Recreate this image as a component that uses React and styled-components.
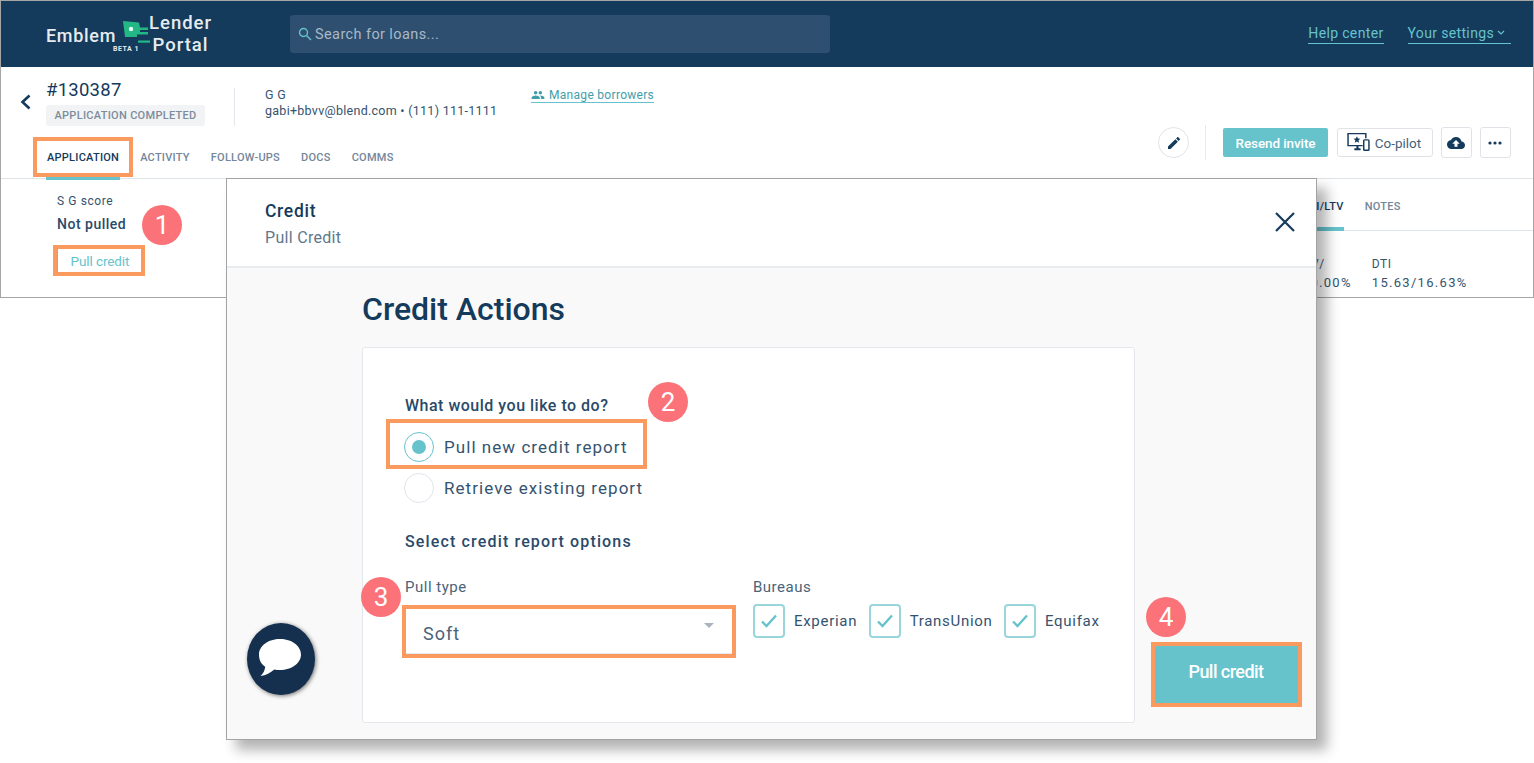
import React from 'react';
import styled, { createGlobalStyle } from 'styled-components';

const NAVY = '#143a5c';
const TEAL = '#66c3cc';
const ORANGE = '#fb9a5f';

const GlobalStyle = createGlobalStyle`
	html, body {
		margin: 0;
		padding: 0;
		background: #fff;
		font-family: Roboto, "Liberation Sans", sans-serif;
		color: ${NAVY};
	}
	* {
		box-sizing: border-box;
	}
`;

const Stage = styled.div`
	position: relative;
	width: 1534px;
	height: 763px;
	overflow: hidden;
`;

const Frame = styled.div`
	width: 1534px;
	height: 298px;
	border: 1px solid #a6a6a6;
	overflow: hidden;
`;

const TopBar = styled.header`
	height: 66px;
	background: ${NAVY};
	display: flex;
	align-items: center;
	padding: 0 22px 0 45px;
`;

const Logo = styled.div`
	width: 244px;
	height: 50px;
	display: flex;
	align-items: center;
	color: #e6ebee;
`;

const LogoLeft = styled.div`
	display: flex;
	flex-direction: column;
	align-items: flex-end;
	margin-top: 10px;
	width: 77px;
`;

const LogoWord = styled.span`
	font-size: 18px;
	line-height: 20px;
	letter-spacing: 0.7px;
	font-weight: 500;
	align-self: flex-start;
`;

const LogoBeta = styled.span`
	font-size: 7px;
	line-height: 8px;
	font-weight: 700;
	letter-spacing: 0.5px;
	margin: -1px -16px 0 0;
`;

const LogoMark = styled.svg`
	width: 30px;
	height: 30px;
	margin-top: 4px;
`;

const LogoRight = styled.div`
	display: flex;
	flex-direction: column;
	align-items: center;
	margin-left: -6px;
	padding-left: 2px;
	font-size: 18.5px;
	line-height: 22px;
	letter-spacing: 1px;
	font-weight: 500;
`;

const SearchBox = styled.div`
	width: 540px;
	height: 38px;
	background: #2e4f6f;
	border-radius: 3px;
	display: flex;
	align-items: center;
	gap: 3px;
	padding-left: 8px;
	color: #a9b9c7;
	font-size: 14.5px;
	letter-spacing: 0.4px;
`;

const TopLinks = styled.nav`
	margin-left: auto;
	display: flex;
	gap: 24px;
`;

const TopLink = styled.a`
	display: flex;
	align-items: center;
	gap: 3px;
	color: ${TEAL};
	font-size: 14px;
	letter-spacing: 0.35px;
	line-height: 17px;
	padding-bottom: 1px;
	padding-right: ${p => (p.$menu ? 6 : 0)}px;
	border-bottom: 1px solid ${TEAL};
`;

const LoanHeader = styled.section`
	height: 112px;
	display: flex;
	justify-content: space-between;
	border-bottom: 1px solid #dfe4e9;
`;

const LoanLeft = styled.div`
	display: flex;
	flex-direction: column;
	justify-content: space-between;
`;

const LoanInfo = styled.div`
	display: flex;
	align-items: flex-start;
	padding: 12px 0 0 18px;
`;

const BackIcon = styled.svg`
	width: 13px;
	height: 16px;
	margin: 15px 14px 0 0;
`;

const IdBlock = styled.div`
	width: 188px;
	padding-right: 28px;
`;

const LoanId = styled.div`
	font-size: 18.5px;
	line-height: 22px;
	letter-spacing: 0.25px;
`;

const StatusBadge = styled.div`
	width: 159px;
	height: 21px;
	margin-top: 4px;
	background: #f1f3f5;
	border-radius: 3px;
	color: #7d8c9b;
	font-size: 11px;
	font-weight: 500;
	letter-spacing: 0.3px;
	line-height: 21px;
	text-align: center;
	white-space: nowrap;
`;

const VDivider = styled.div`
	width: 1px;
	height: 38px;
	margin-top: 9px;
	background: #e4e7eb;
`;

const Contact = styled.div`
	margin: 8px 0 0 30px;
	width: 266px;
	font-size: 12.5px;
	line-height: 15.5px;
	letter-spacing: 0.27px;
	color: #35536f;
	white-space: nowrap;
`;

const Manage = styled.a`
	display: flex;
	align-items: center;
	gap: 4px;
	margin-top: 9px;
	color: #3f9eaa;
	font-size: 12px;
	letter-spacing: 0.3px;
	line-height: 14px;
	border-bottom: 1px solid ${TEAL};
`;

const Tabs = styled.nav`
	display: flex;
	gap: 19px;
	padding-left: 45px;
`;

const Tab = styled.a`
	font-size: 11px;
	font-weight: 500;
	letter-spacing: 0.25px;
	line-height: 13px;
	padding: 0 1px 13px;
	margin-bottom: -2px;
	color: ${p => (p.$active ? NAVY : '#73869a')};
	border-bottom: 3px solid ${p => (p.$active ? TEAL : 'transparent')};
	position: relative;
`;

const Actions = styled.div`
	display: flex;
	align-items: center;
	padding: 0 22px 18px 0;
	align-self: flex-end;
`;

const RoundButton = styled.button`
	width: 31px;
	height: 31px;
	padding: 0;
	border-radius: 50%;
	background: #fff;
	border: 1px solid #e0e4e9;
	display: flex;
	align-items: center;
	justify-content: center;
`;

const ActionDivider = styled.div`
	width: 1px;
	height: 35px;
	background: #e8ebee;
	margin: 0 17px 0 16px;
`;

const PrimaryButton = styled.button`
	width: 105px;
	height: 29px;
	border: 0;
	border-radius: 2px;
	background: ${TEAL};
	color: #fff;
	font: 500 13.5px Roboto, sans-serif;
	letter-spacing: -0.1px;
	padding: 0;
`;

const GhostButton = styled.button`
	height: ${p => (p.$square ? 31 : 29)}px;
	width: ${p => (p.$square ? 31 : 96)}px;
	margin-left: ${p => (p.$square ? 8 : 9)}px;
	border: 1px solid #dfe3e8;
	border-radius: 3px;
	background: #fff;
	display: flex;
	align-items: center;
	justify-content: center;
	gap: 5px;
	padding: 0 2px 0 0;
	color: #45617b;
	font: 400 13.5px Roboto, sans-serif;
	letter-spacing: 0;
`;

const ScoreRow = styled.section`
	display: flex;
	justify-content: space-between;
`;

const ScoreBlock = styled.div`
	padding: 15px 0 0 56px;
`;

const ScoreLabel = styled.div`
	font-size: 12px;
	line-height: 14px;
	letter-spacing: 0.6px;
	color: #35536f;
`;

const ScoreValue = styled.div`
	margin-top: 7px;
	font-size: 14px;
	line-height: 18px;
	font-weight: 500;
	letter-spacing: 0.5px;
	color: #2a4a69;
`;

const TextButton = styled.button`
	display: block;
	margin-top: 12px;
	width: 86px;
	height: 31px;
	padding: 0;
	border: 1px solid ${TEAL};
	background: #fff;
	color: ${TEAL};
	font: 400 13.5px Roboto, sans-serif;
	letter-spacing: -0.1px;
`;

const SidePanel = styled.div`
	width: 279px;
	flex: none;
`;

const SideTabs = styled.div`
	display: flex;
	height: 52px;
	gap: 21px;
	padding-left: 48px;
	align-items: flex-end;
	border-bottom: 1px solid #dfe4e9;
`;

const SideTab = styled.span`
	font-size: 11px;
	font-weight: 500;
	letter-spacing: 0.3px;
	line-height: 13px;
	padding-bottom: 14px;
	margin-bottom: -1px;
	color: ${p => (p.$active ? NAVY : '#73869a')};
	border-bottom: 4px solid ${p => (p.$active ? TEAL : 'transparent')};
`;

const Metrics = styled.div`
	display: flex;
	gap: 20px;
	padding: 26px 0 0 2px;
`;

const Metric = styled.div`
	font-size: 12px;
	line-height: 14px;
	letter-spacing: 0.5px;
	color: #35536f;
	white-space: nowrap;
`;

const MetricValue = styled.div`
	margin-top: 4px;
	font-size: 13px;
	line-height: 15px;
	letter-spacing: 1.3px;
`;

const Modal = styled.div`
	position: absolute;
	left: 226px;
	top: 178px;
	width: 1091px;
	height: 562px;
	background: #f9f9f9;
	border: 1px solid #a3a3a3;
	box-shadow: 10px 10px 12px rgba(0, 0, 0, 0.3);
`;

const ModalHeader = styled.div`
	height: 89px;
	background: #fff;
	border-bottom: 2px solid #e9ecef;
	padding: 22px 20px 0 38px;
	display: flex;
	justify-content: space-between;
`;

const ModalTitle = styled.div`
	font-size: 17.5px;
	line-height: 20px;
	font-weight: 500;
	letter-spacing: 0.7px;
`;

const ModalSub = styled.div`
	margin-top: 7px;
	font-size: 16px;
	line-height: 20px;
	letter-spacing: 0.3px;
	color: #61778c;
`;

const CloseIcon = styled.svg`
	width: 22px;
	height: 22px;
	margin-top: 10px;
`;

const ModalBody = styled.div`
	padding: 22px 15px 0 135px;
`;

const ActionsTitle = styled.h1`
	margin: 0 0 19px;
	font-size: 32px;
	line-height: 38px;
	font-weight: 500;
	letter-spacing: 0;
`;

const BodyRow = styled.div`
	display: flex;
	align-items: flex-end;
	gap: 19px;
`;

const Card = styled.div`
	width: 773px;
	height: 376px;
	background: #fff;
	border: 1px solid #e4e8ec;
	border-radius: 3px;
	padding: 48px 0 0 42px;
`;

const FieldTitle = styled.div`
	font-size: 16px;
	line-height: 20px;
	font-weight: 500;
	letter-spacing: ${p => p.$ls}px;
	color: #2a4a69;
	margin-top: ${p => p.$mt || 0}px;
`;

const RadioGroup = styled.div`
	margin-top: 10px;
`;

const RadioRow = styled.div`
	display: flex;
	align-items: center;
	gap: 10px;
	height: 41px;
	font-size: 17px;
	letter-spacing: 1.05px;
	color: #35536f;
`;

const Radio = styled.span`
	width: 30px;
	height: 30px;
	border-radius: 50%;
	margin-left: -1px;
	border: 1.5px solid ${p => (p.$on ? TEAL : '#e0e4e9')};
	display: flex;
	align-items: center;
	justify-content: center;
	&::after {
		content: '';
		width: 14px;
		height: 14px;
		border-radius: 50%;
		background: ${p => (p.$on ? TEAL : 'transparent')};
	}
`;

const OptionsRow = styled.div`
	display: flex;
	margin-top: 26px;
`;

const PullType = styled.div`
	width: 348px;
`;

const FieldLabel = styled.div`
	font-size: 15px;
	line-height: 18px;
	letter-spacing: 0.5px;
	color: #4b6379;
`;

const SelectBox = styled.div`
	width: 328px;
	height: 46px;
	margin-top: 12px;
	display: flex;
	align-items: center;
	justify-content: space-between;
	padding: 4px 18px 0 17px;
	border: 1px solid #e6eaee;
	font-size: 18px;
	letter-spacing: 1px;
	color: #4b6379;
	&::after {
		content: '';
		margin-top: -16px;
		border-left: 5px solid transparent;
		border-right: 5px solid transparent;
		border-top: 5px solid #a9b4bf;
	}
`;

const Bureaus = styled.div`
	display: flex;
	margin-top: 8px;
`;

const CheckItem = styled.div`
	display: flex;
	align-items: center;
	gap: 9px;
	margin-right: 11.5px;
	font-size: 15px;
	letter-spacing: 0.7px;
	color: #35536f;
`;

const CheckBox = styled.span`
	width: 32px;
	height: 34px;
	border: 2px solid #98d6dc;
	border-radius: 4px;
	display: flex;
	align-items: center;
	justify-content: center;
`;

const PullButton = styled.button`
	width: 146px;
	height: 60px;
	margin-bottom: 17px;
	border: 0;
	border-radius: 2px;
	background: ${TEAL};
	color: #fff;
	font: 500 18px Roboto, sans-serif;
	letter-spacing: -0.55px;
	padding: 0 2px 9px 0;
`;

const ChatButton = styled.div`
	position: absolute;
	left: 20px;
	top: 444px;
	width: 68px;
	height: 72px;
	border-radius: 50%;
	background: #15304f;
	box-shadow: 1px 1px 4px rgba(0, 0, 0, 0.55);
	display: flex;
	align-items: center;
	justify-content: center;
	padding: 0 3px 2px 0;
`;

const Highlight = styled.div`
	position: absolute;
	left: ${p => p.$x}px;
	top: ${p => p.$y}px;
	width: ${p => p.$w}px;
	height: ${p => p.$h}px;
	border: 4px solid ${ORANGE};
	pointer-events: none;
`;

const StepBadge = styled.div`
	position: absolute;
	left: ${p => p.$x - 20}px;
	top: ${p => p.$y - 20}px;
	width: 40px;
	height: 40px;
	border-radius: 50%;
	background: #fb7378;
	color: #fff;
	font-size: 26px;
	line-height: 40px;
	text-align: center;
`;

const Icon = ({ d, size = 16, color = NAVY }) => (
	<svg width={size} height={size} viewBox="0 0 24 24" fill={color}>
		<path d={d} />
	</svg>
);

const PENCIL = 'M3 17.25V21h3.75L17.81 9.94l-3.75-3.75L3 17.25zM20.71 7.04c.39-.39.39-1.02 0-1.41l-2.34-2.34c-.39-.39-1.02-.39-1.41 0l-1.83 1.83 3.75 3.75 1.83-1.83z';
const CLOUD = 'M19.35 10.04C18.67 6.59 15.64 4 12 4 9.11 4 6.6 5.64 5.35 8.04 2.34 8.36 0 10.91 0 14c0 3.31 2.69 6 6 6h13c2.76 0 5-2.24 5-5 0-2.64-2.05-4.78-4.65-4.96zM14 13v4h-4v-4H7l5-5 5 5h-3z';
const PEOPLE = 'M16 11c1.66 0 2.99-1.34 2.99-3S17.66 5 16 5c-1.66 0-3 1.34-3 3s1.34 3 3 3zm-8 0c1.66 0 2.99-1.34 2.99-3S9.66 5 8 5C6.34 5 5 6.34 5 8s1.34 3 3 3zm0 2c-2.33 0-7 1.17-7 3.5V19h14v-2.5c0-2.33-4.67-3.5-7-3.5zm8 0c-.29 0-.62.02-.97.05 1.16.84 1.97 1.97 1.97 3.45V19h6v-2.5c0-2.33-4.67-3.5-7-3.5z';

const Check = () => (
	<svg width="20" height="20" viewBox="0 0 20 20" fill="none" stroke={TEAL} strokeWidth="2.4">
		<path d="M3 10.5l4.5 4.5L17 4.5" />
	</svg>
);

const CopilotIcon = () => (
	<svg width="23" height="21" viewBox="0 0 22 20" fill="none" stroke={NAVY} strokeWidth="1.4">
		<path d="M15 13H1V1.5h17V6" />
		<path d="M7 16.5h6M10 13v3" strokeWidth="2" />
		<rect x="16" y="7.5" width="5" height="10" rx="0.8" />
		<path d="M9.5 4l1 2.2 2.3.2-1.8 1.5.6 2.3-2.1-1.2-2.1 1.2.6-2.3-1.8-1.5 2.3-.2z" fill={NAVY} stroke="none" />
	</svg>
);

const Application = () => (
	<Stage>
		<GlobalStyle />
		<Frame>
			<TopBar>
				<Logo>
					<LogoLeft>
						<LogoWord>Emblem</LogoWord>
						<LogoBeta>BETA 1</LogoBeta>
					</LogoLeft>
					<LogoMark viewBox="0 0 30 30">
						<path d="M0 0l16 1.500 1 5h8v2.500H17v2h8v2.500H14v2.500H2z" fill="#22b784" />
						<path d="M15 19.500h12v2.200H15z" fill="#22b784" />
						<circle cx="8" cy="8" r="2.200" fill="#e8fff5" />
					</LogoMark>
					<LogoRight>
						<span>Lender</span>
						<span>Portal</span>
					</LogoRight>
				</Logo>
				<SearchBox>
					<svg width="14" height="14" viewBox="0 0 14 14" fill="none" stroke={TEAL} strokeWidth="1.4">
						<circle cx="5.5" cy="5.5" r="4" />
						<path d="M8.5 8.5l4.5 4.5" />
					</svg>
					Search for loans...
				</SearchBox>
				<TopLinks>
					<TopLink>Help center</TopLink>
					<TopLink $menu>
						Your settings
						<svg width="8" height="6" viewBox="0 0 8 6" fill="none" stroke={TEAL} strokeWidth="1.2">
							<path d="M1 1l3 3 3-3" />
						</svg>
					</TopLink>
				</TopLinks>
			</TopBar>
			<LoanHeader>
				<LoanLeft>
					<LoanInfo>
						<BackIcon viewBox="0 0 13 16" fill="none" stroke={NAVY} strokeWidth="2.6">
							<path d="M10.5 1.5L3.5 8l7 6.5" />
						</BackIcon>
						<IdBlock>
							<LoanId>#130387</LoanId>
							<StatusBadge>APPLICATION COMPLETED</StatusBadge>
						</IdBlock>
						<VDivider />
						<Contact>
							G G
							<br />
							gabi+bbvv@blend.com • (111) 111-1111
						</Contact>
						<Manage>
							<Icon d={PEOPLE} size={14} color="#3f9eaa" />
							Manage borrowers
						</Manage>
					</LoanInfo>
					<Tabs>
						<Tab $active>APPLICATION</Tab>
						<Tab>ACTIVITY</Tab>
						<Tab>FOLLOW-UPS</Tab>
						<Tab>DOCS</Tab>
						<Tab>COMMS</Tab>
					</Tabs>
				</LoanLeft>
				<Actions>
					<RoundButton>
						<Icon d={PENCIL} size={16} />
					</RoundButton>
					<ActionDivider />
					<PrimaryButton>Resend invite</PrimaryButton>
					<GhostButton>
						<CopilotIcon />
						Co-pilot
					</GhostButton>
					<GhostButton $square>
						<Icon d={CLOUD} size={18} />
					</GhostButton>
					<GhostButton $square>
						<svg width="14" height="4" viewBox="0 0 14 4" fill={NAVY}>
							<circle cx="2" cy="2" r="1.6" />
							<circle cx="7" cy="2" r="1.6" />
							<circle cx="12" cy="2" r="1.6" />
						</svg>
					</GhostButton>
				</Actions>
			</LoanHeader>
			<ScoreRow>
				<ScoreBlock>
					<ScoreLabel>S G score</ScoreLabel>
					<ScoreValue>Not pulled</ScoreValue>
					<TextButton>Pull credit</TextButton>
				</ScoreBlock>
				<SidePanel>
					<SideTabs>
						<SideTab $active>DTI/LTV</SideTab>
						<SideTab>NOTES</SideTab>
					</SideTabs>
					<Metrics>
						<Metric>
							LTV / CLTV/
							<MetricValue>80.00/80.00%</MetricValue>
						</Metric>
						<Metric>
							DTI
							<MetricValue>15.63/16.63%</MetricValue>
						</Metric>
					</Metrics>
				</SidePanel>
			</ScoreRow>
		</Frame>

		<Modal>
			<ModalHeader>
				<div>
					<ModalTitle>Credit</ModalTitle>
					<ModalSub>Pull Credit</ModalSub>
				</div>
				<CloseIcon viewBox="0 0 22 22" fill="none" stroke={NAVY} strokeWidth="2.2">
					<path d="M2 2l18 18M20 2L2 20" />
				</CloseIcon>
			</ModalHeader>
			<ModalBody>
				<ActionsTitle>Credit Actions</ActionsTitle>
				<BodyRow>
					<Card>
						<FieldTitle $ls={0.5}>What would you like to do?</FieldTitle>
						<RadioGroup>
							<RadioRow>
								<Radio $on />
								Pull new credit report
							</RadioRow>
							<RadioRow>
								<Radio />
								Retrieve existing report
							</RadioRow>
						</RadioGroup>
						<FieldTitle $mt={24} $ls={1.15}>Select credit report options</FieldTitle>
						<OptionsRow>
							<PullType>
								<FieldLabel>Pull type</FieldLabel>
								<SelectBox>Soft</SelectBox>
							</PullType>
							<div>
								<FieldLabel>Bureaus</FieldLabel>
								<Bureaus>
									<CheckItem>
										<CheckBox>
											<Check />
										</CheckBox>
										Experian
									</CheckItem>
									<CheckItem>
										<CheckBox>
											<Check />
										</CheckBox>
										TransUnion
									</CheckItem>
									<CheckItem>
										<CheckBox>
											<Check />
										</CheckBox>
										Equifax
									</CheckItem>
								</Bureaus>
							</div>
						</OptionsRow>
					</Card>
					<PullButton>Pull credit</PullButton>
				</BodyRow>
			</ModalBody>
			<ChatButton>
				<svg width="46" height="44" viewBox="0 0 46 44" fill="#fff">
					<path d="M23 3c11.5 0 21 6.8 21 15.5S34.5 34 23 34c-2 0-3.9-.2-5.7-.6C13.5 36.800 9 39 3.5 40c2.700-2.500 4.300-5.500 4.700-9.300C3.800 28 2 23.500 2 18.500 2 9.800 11.500 3 23 3z" />
				</svg>
			</ChatButton>
		</Modal>

		<Highlight $x={33} $y={137} $w={100} $h={40} />
		<Highlight $x={53} $y={245} $w={92} $h={31} />
		<Highlight $x={386} $y={419} $w={261} $h={50} />
		<Highlight $x={402} $y={605} $w={334} $h={53} />
		<Highlight $x={1151} $y={642} $w={151} $h={65} />

		<StepBadge $x={162} $y={225}>1</StepBadge>
		<StepBadge $x={668} $y={402}>2</StepBadge>
		<StepBadge $x={381} $y={597}>3</StepBadge>
		<StepBadge $x={1166} $y={617}>4</StepBadge>
	</Stage>
);

export default Application;
